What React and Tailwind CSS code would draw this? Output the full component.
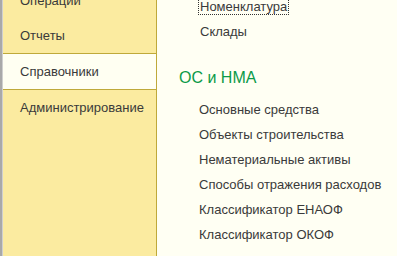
import React from 'react';

const sections = ['Операции', 'Отчеты', 'Справочники', 'Администрирование'];

const refItems = ['Номенклатура', 'Склады'];

const osItems = [
  'Основные средства',
  'Объекты строительства',
  'Нематериальные активы',
  'Способы отражения расходов',
  'Классификатор ЕНАОФ',
  'Классификатор ОКОФ',
];

export default function App() {
  const active = 'Справочники';

  return (
    <div
      className="flex w-[397px] h-[256px] overflow-hidden bg-[#fffff3] text-[13px] text-[#3a3a3a]"
      style={{ fontFamily: '"Liberation Sans", Arial, sans-serif' }}
    >
      {/* left edge */}
      <div className="w-[2px] shrink-0 bg-[#a9a9a9]" />
      <div className="w-[1px] shrink-0 bg-[#cfcfcf]" />

      {/* sections panel */}
      <div className="w-[154px] shrink-0 bg-[#fbeba0] border-r border-[#bfa93a] flex flex-col -mt-[17px]">
        {sections.map(s =>
          s === active ? (
            <div
              key={s}
              className="h-[37px] shrink-0 flex items-center pl-[17px] bg-[#fffff2] border-y border-[#bfa93a]"
            >
              {s}
            </div>
          ) : (
            <div key={s} className="h-[35px] shrink-0 flex items-center pl-[17px]">
              {s}
            </div>
          )
        )}
      </div>

      {/* content */}
      <div className="flex-1 flex flex-col -mt-[6px]">
        <div className="pl-[41px]">
          {refItems.map((it, i) => (
            <div key={it} className="h-[25px] flex items-center">
              <span
                className={
                  i === 0
                    ? 'px-[1px] leading-[14px] border border-dotted border-[#333333]'
                    : 'pl-[2px]'
                }
              >
                {it}
              </span>
            </div>
          ))}
        </div>
        <div className="mt-[24px] pl-[22px] h-[20px] flex items-center text-[16px] text-[#0b9a48]">
          ОС и НМА
        </div>
        <div className="mt-[9px] pl-[42px]">
          {osItems.map(it => (
            <div key={it} className="h-[25px] flex items-center">
              {it}
            </div>
          ))}
        </div>
      </div>
    </div>
  );
}
